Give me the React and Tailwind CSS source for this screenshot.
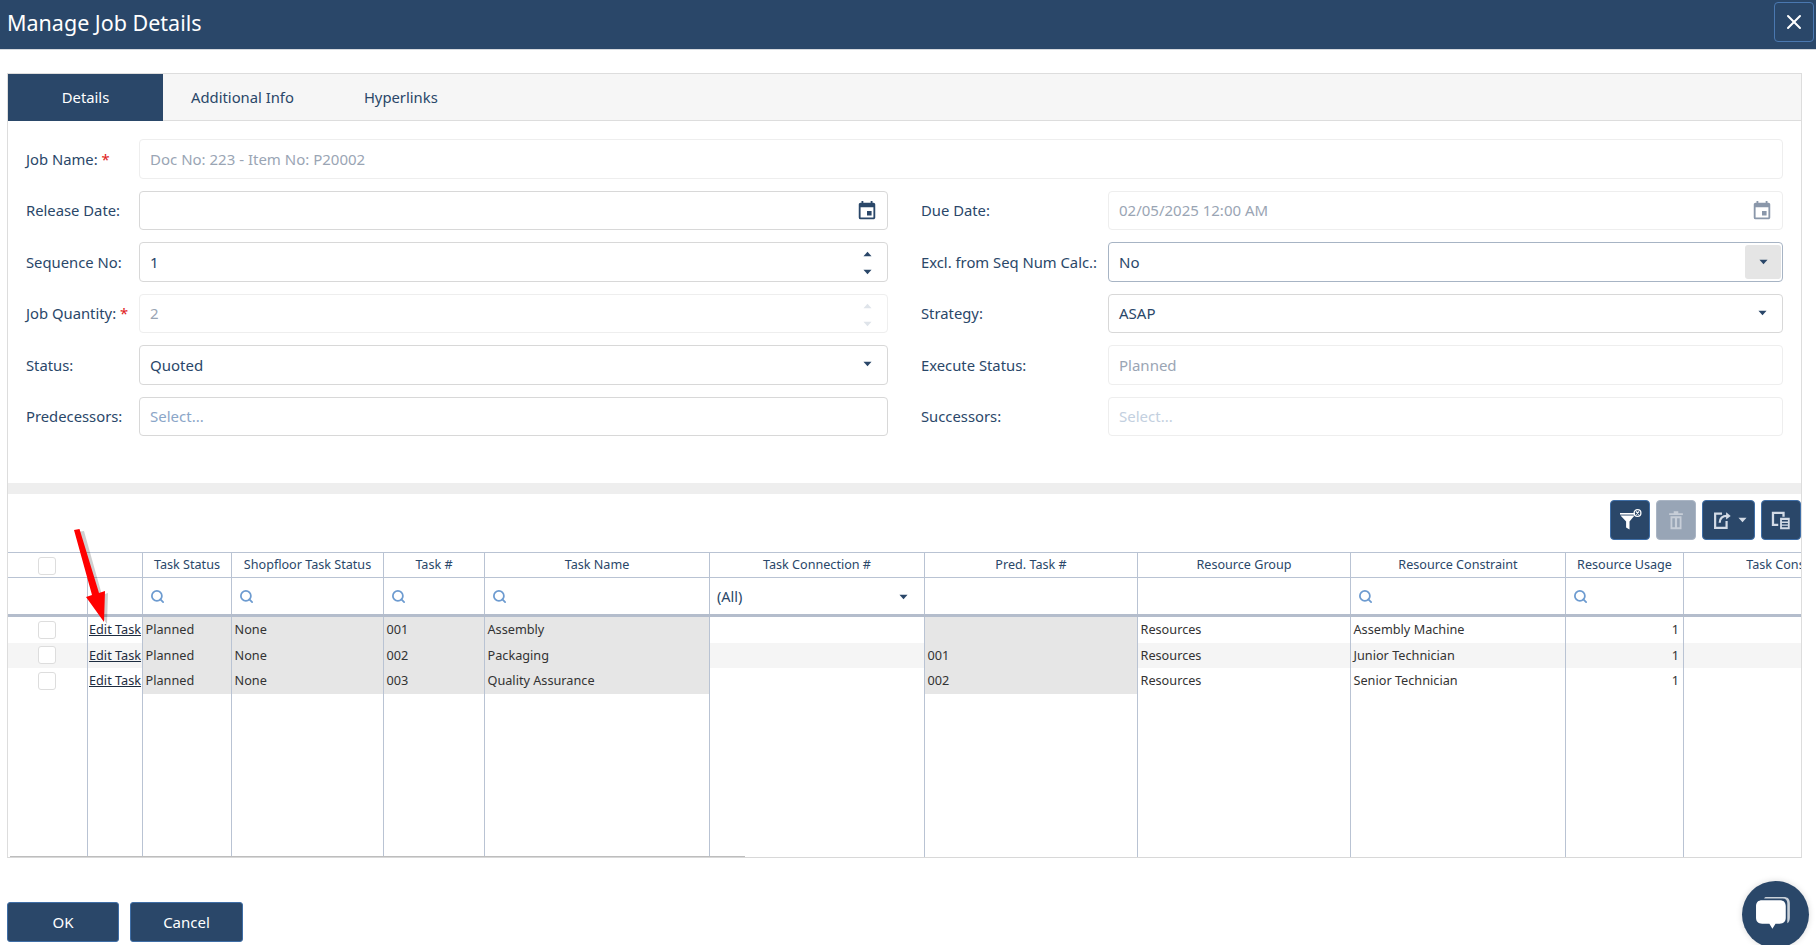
import React from "react";
import { MdEvent } from "react-icons/md";
import { Search, X } from "lucide-react";

const COLS = "grid grid-cols-[80px_55px_89px_152px_101px_225px_215px_213px_213px_215px_118px_215px]";
const LINE = "border-r border-[#b9c3d3]";

function Caret({ className = "", up = false }) {
  return (
    <svg viewBox="0 0 10 6" className={"w-[9px] h-[6px] " + className} fill="currentColor">
      {up ? <path d="M5 0.5 L9.500 5.500 H0.500 Z" /> : <path d="M0.500 0.500 H9.500 L5 5.500 Z" />}
    </svg>
  );
}

function Field({ label, req, value, kind, disabled, focused, wide, placeholder }) {
  return (
    <div className="flex items-center h-[39.5px]">
      <div className={"shrink-0 text-[14.8px] text-[#2a4769] " + (wide ? "w-[187px]" : "w-[113px]")}>
        {label}
        {req && <span className="text-[#e02020]"> *</span>}
      </div>
      <div
        className={
          "relative flex-1 h-full flex items-center pl-[10px] rounded-[4px] border text-[15px] bg-white " +
          (disabled ? "border-[#eeeeee] text-[#9aa5b4]" : focused ? "border-[#a7b4c4] text-[#2a4769]" : "border-[#d8d8d8] text-[#2a4769]")
        }
      >
        {placeholder ? (
          <span className={disabled ? "text-[#c3d0e0]" : "text-[#8ba6c8]"}>{placeholder}</span>
        ) : (
          <span>{value}</span>
        )}
        {kind === "date" && (
          <MdEvent className={"absolute right-[9px] top-[8px] text-[22px] " + (disabled ? "text-[#8a97aa]" : "text-[#2a4769]")} />
        )}
        {kind === "spin" && (
          <div className={"absolute right-[15px] top-[8px] flex flex-col gap-[12px] " + (disabled ? "text-[#dfe4ea]" : "text-[#2a4769]")}>
            <Caret up />
            <Caret />
          </div>
        )}
        {kind === "select" && <Caret className="absolute right-[15px] top-[15px] text-[#2a4769]" />}
        {kind === "selectbtn" && (
          <div className="absolute right-[1px] top-[2px] bottom-[2px] w-[36px] rounded-[3px] bg-[#e5e5e5] flex items-center justify-center text-[#2a4769]">
            <Caret />
          </div>
        )}
      </div>
    </div>
  );
}

function ToolBtn({ className = "", disabled, children }) {
  return (
    <div
      className={
        "h-[40px] rounded-[4px] border flex items-center justify-center " +
        (disabled ? "bg-[#98a5b6] border-[#aab5c4] " : "bg-[#2a4769] border-[#3f6ea6] ") +
        className
      }
    >
      {children}
    </div>
  );
}

const HEAD = [
  "",
  "",
  "Task Status",
  "Shopfloor Task Status",
  "Task #",
  "Task Name",
  "Task Connection #",
  "Pred. Task #",
  "Resource Group",
  "Resource Constraint",
  "Resource Usage",
  "Task Constraint",
];

const ROWS = [
  ["Planned", "None", "001", "Assembly", "", "", "Resources", "Assembly Machine", "1"],
  ["Planned", "None", "002", "Packaging", "", "001", "Resources", "Junior Technician", "1"],
  ["Planned", "None", "003", "Quality Assurance", "", "002", "Resources", "Senior Technician", "1"],
];

function SearchCell() {
  return <Search className="w-[15px] h-[15px] text-[#6d9bd0] ml-[7px]" strokeWidth={2.8} />;
}

function Checkbox() {
  return <div className="w-[18px] h-[18px] rounded-[3px] border border-[#dddddd] bg-white ml-[30px]" />;
}

export default function App() {
  return (
    <div className="relative w-[1816px] h-[945px] overflow-hidden bg-white font-['Noto_Sans','Open_Sans',sans-serif]">
      <header className="h-[50px] bg-[#2a4769] border-b border-[#d5d9de] flex items-center justify-between pl-[7px] pr-[2px]">
        <h1 className="text-[21.5px] text-white -mt-[3px]">Manage Job Details</h1>
        <button className="w-[40px] h-[40px] -mt-[5px] rounded-[4px] border border-[#4a78b0] flex items-center justify-center text-white">
          <X className="w-[24px] h-[24px]" strokeWidth={2} />
        </button>
      </header>

      <section className="absolute left-[7px] top-[73px] w-[1795px] h-[785px] border border-[#dddddd] border-b-[#d8d8d8]">
        <div className="h-[47px] bg-[#f6f6f6] border-b border-[#dddddd] flex text-[14.8px] text-[#2a4769]">
          <div className="w-[155px] h-[47px] bg-[#2a4769] text-white flex items-center justify-center">Details</div>
          <div className="ml-[28px] h-full flex items-center pt-[1px]">Additional Info</div>
          <div className="ml-[70px] h-full flex items-center pt-[1px]">Hyperlinks</div>
        </div>

        <div className="grid grid-cols-[869px_1fr] content-start gap-y-[12px] pl-[18px] pr-[18px] pt-[18px] h-[362px]">
          <div className="col-span-2"><Field label="Job Name:" req disabled value="Doc No: 223 - Item No: P20002" /></div>
          <div className="pr-[7px]"><Field label="Release Date:" kind="date" /></div>
          <div className="pl-[26px]"><Field wide label="Due Date:" kind="date" disabled value="02/05/2025 12:00 AM" /></div>
          <div className="pr-[7px]"><Field label="Sequence No:" kind="spin" value="1" /></div>
          <div className="pl-[26px]"><Field wide label="Excl. from Seq Num Calc.:" kind="selectbtn" focused value="No" /></div>
          <div className="pr-[7px]"><Field label="Job Quantity:" req kind="spin" disabled value="2" /></div>
          <div className="pl-[26px]"><Field wide label="Strategy:" kind="select" value="ASAP" /></div>
          <div className="pr-[7px]"><Field label="Status:" kind="select" value="Quoted" /></div>
          <div className="pl-[26px]"><Field wide label="Execute Status:" disabled value="Planned" /></div>
          <div className="pr-[7px]"><Field label="Predecessors:" placeholder="Select..." /></div>
          <div className="pl-[26px]"><Field wide label="Successors:" disabled placeholder="Select..." /></div>
        </div>

        <div className="h-[11px] bg-[#eeeeee]" />

        <div className="h-[58px] flex justify-end gap-[6px] pt-[6px]">
          <ToolBtn className="w-[40px]">
            <svg viewBox="0 0 24 24" className="w-[24px] h-[24px]" fill="#ffffff">
              <path d="M2 5h15v1.6H2z" />
              <path d="M2.500 7.600h14L11.500 13.500v8l-3.400-2v-6z" />
              <circle cx="19.500" cy="5" r="3.400" fill="none" stroke="#ffffff" strokeWidth="1.3" />
              <path d="M18 3.500l3 3M21 3.500l-3 3" stroke="#ffffff" strokeWidth="1.100" />
            </svg>
          </ToolBtn>
          <ToolBtn className="w-[40px]" disabled>
            <svg viewBox="0 0 24 24" className="w-[22px] h-[22px]" fill="#c7ced8">
              <path d="M9.500 2.500h5V4.500h5v2h-15v-2h5z" />
              <path d="M6 8h12v14H6zM8 10v10h2.800V10zm5.200 0v10H16V10z" fillRule="evenodd" />
            </svg>
          </ToolBtn>
          <ToolBtn className="w-[53px] gap-[5px]">
            <svg viewBox="0 0 24 24" className="w-[22px] h-[22px]" fill="none" stroke="#d3dbe6" strokeWidth="2.400">
              <path d="M12 5H4.500v15.500H17V13" />
              <path d="M9.500 15c0-5 3-7.500 8-7.500" />
              <path d="M16.500 3.500l5 4-5 4z" fill="#d3dbe6" stroke="none" />
            </svg>
            <Caret className="text-[#d3dbe6]" />
          </ToolBtn>
          <ToolBtn className="w-[40px]">
            <svg viewBox="0 0 24 24" className="w-[22px] h-[22px]" fill="#d3dbe6">
              <path d="M2 3h14v5.500h-2.500V5.500h-9V16H9v2.500H2z" />
              <path d="M11 9.500h10.500V22H11zM13 12v1.600h6.500V12zm0 3.200v1.600h6.500v-1.600zm0 3.200V20h6.500v-1.600z" fillRule="evenodd" />
            </svg>
          </ToolBtn>
        </div>

        <div className="h-[305px] border-t border-[#b9c3d3] flex flex-col text-[12.7px] overflow-hidden w-[1793px]">
          <div className={COLS + " h-[25px] border-b border-[#b9c3d3] text-[#2a4769] shrink-0 text-[12.6px]"}>
            {HEAD.map((h, i) => (
              <div key={i} className={"flex items-center whitespace-nowrap overflow-hidden pt-[1px] " + (i === 0 ? "" : "justify-center ") + (i > 0 && i < 11 ? LINE : "")}>
                {i === 0 ? <Checkbox /> : h}
              </div>
            ))}
          </div>
          <div className={COLS + " h-[39px] border-b-[3px] border-[#b4bdcc] shrink-0"}>
            <div />
            <div className={"border-l -ml-[1px] " + LINE} />
            {[1, 1, 1, 1].map((_, i) => (
              <div key={i} className={"flex items-center " + LINE}>
                <SearchCell />
              </div>
            ))}
            <div className={"relative flex items-center pl-[7px] text-[14.5px] text-[#2a4769] " + LINE}>
              <span className="pt-[2px]">(All)</span>
              <Caret className="absolute right-[16px] top-[16px] text-[#2a4769]" />
            </div>
            <div className={LINE} />
            <div className={LINE} />
            <div className={"flex items-center " + LINE}>
              <SearchCell />
            </div>
            <div className={"flex items-center " + LINE}>
              <SearchCell />
            </div>
            <div />
          </div>
          {ROWS.map((r, i) => {
            const alt = i === 1 ? "bg-[#f5f5f5]" : "";
            const lock = "bg-[#e6e6e6]";
            return (
              <div key={i} className={COLS + " h-[25.5px] shrink-0 text-[#333333] " + alt}>
                <div className="flex items-center"><Checkbox /></div>
                <div className={"flex items-center pl-[1px] border-l border-[#b9c3d3] -ml-[1px] " + LINE}>
                  <a className="underline text-[#1d2c40] whitespace-nowrap">Edit Task</a>
                </div>
                {r.map((c, j) => (
                  <div
                    key={j}
                    className={
                      "flex items-center px-[2.5px] whitespace-nowrap " +
                      (j < 4 || j === 5 ? lock + " " : "") +
                      (j === 8 ? "justify-end pr-[4px] " : "") +
                      LINE
                    }
                  >
                    {c}
                  </div>
                ))}
                <div />
              </div>
            );
          })}
          <div className={COLS + " flex-1"}>
            <div />
            {HEAD.slice(1, 11).map((_, i) => (
              <div key={i} className={LINE + (i === 0 ? " border-l -ml-[1px]" : "")} />
            ))}
            <div />
          </div>
        </div>
        <div className="absolute left-[2px] bottom-[0px] w-[735px] h-[1px] bg-[#bdbdbd]" />
      </section>

      <div className="absolute left-[7px] top-[902px] flex gap-[11px] text-[15px] text-white">
        <button className="w-[112px] h-[40px] rounded-[3px] bg-[#2a4769] border border-[#3f6ea6]">OK</button>
        <button className="w-[113px] h-[40px] rounded-[3px] bg-[#2a4769] border border-[#3f6ea6]">Cancel</button>
      </div>

      <div className="absolute left-[1742px] top-[881px] w-[67px] h-[67px] rounded-full bg-[#2a4769] shadow-[0_0_6px_rgba(0,0,0,0.15)] flex items-center justify-center">
        <svg viewBox="0 0 40 36" className="w-[41px] h-[37px]">
          <path d="M9 2.500C9 1.500 10 1 11 1h17c4 0 6 2 6 6v14c0 3-1 5-2.500 5.500V7c0-2.500-1.500-4.500-4.500-4.500z" fill="#ffffff" opacity="0.75" />
          <path d="M7 4h17c4 0 6 2 6 6v11c0 4-2 6-6 6h-4l-3 5-3-5H7c-4 0-6-2-6-6V10c0-4 2-6 6-6z" fill="#ffffff" />
        </svg>
      </div>

      <svg className="absolute left-[60px] top-[520px] w-[60px] h-[110px] pointer-events-none" viewBox="0 0 60 110">
        <path d="M14 10 L21 9 L39 73 L45 71 L44 102 L26 77 L32 75 Z" fill="#00000030" transform="translate(3,2)" />
        <path d="M14 10 L19.500 9 L39 73 L45 71 L44 102 L26 77 L32 75 Z" fill="#ff0000" />
      </svg>
    </div>
  );
}
